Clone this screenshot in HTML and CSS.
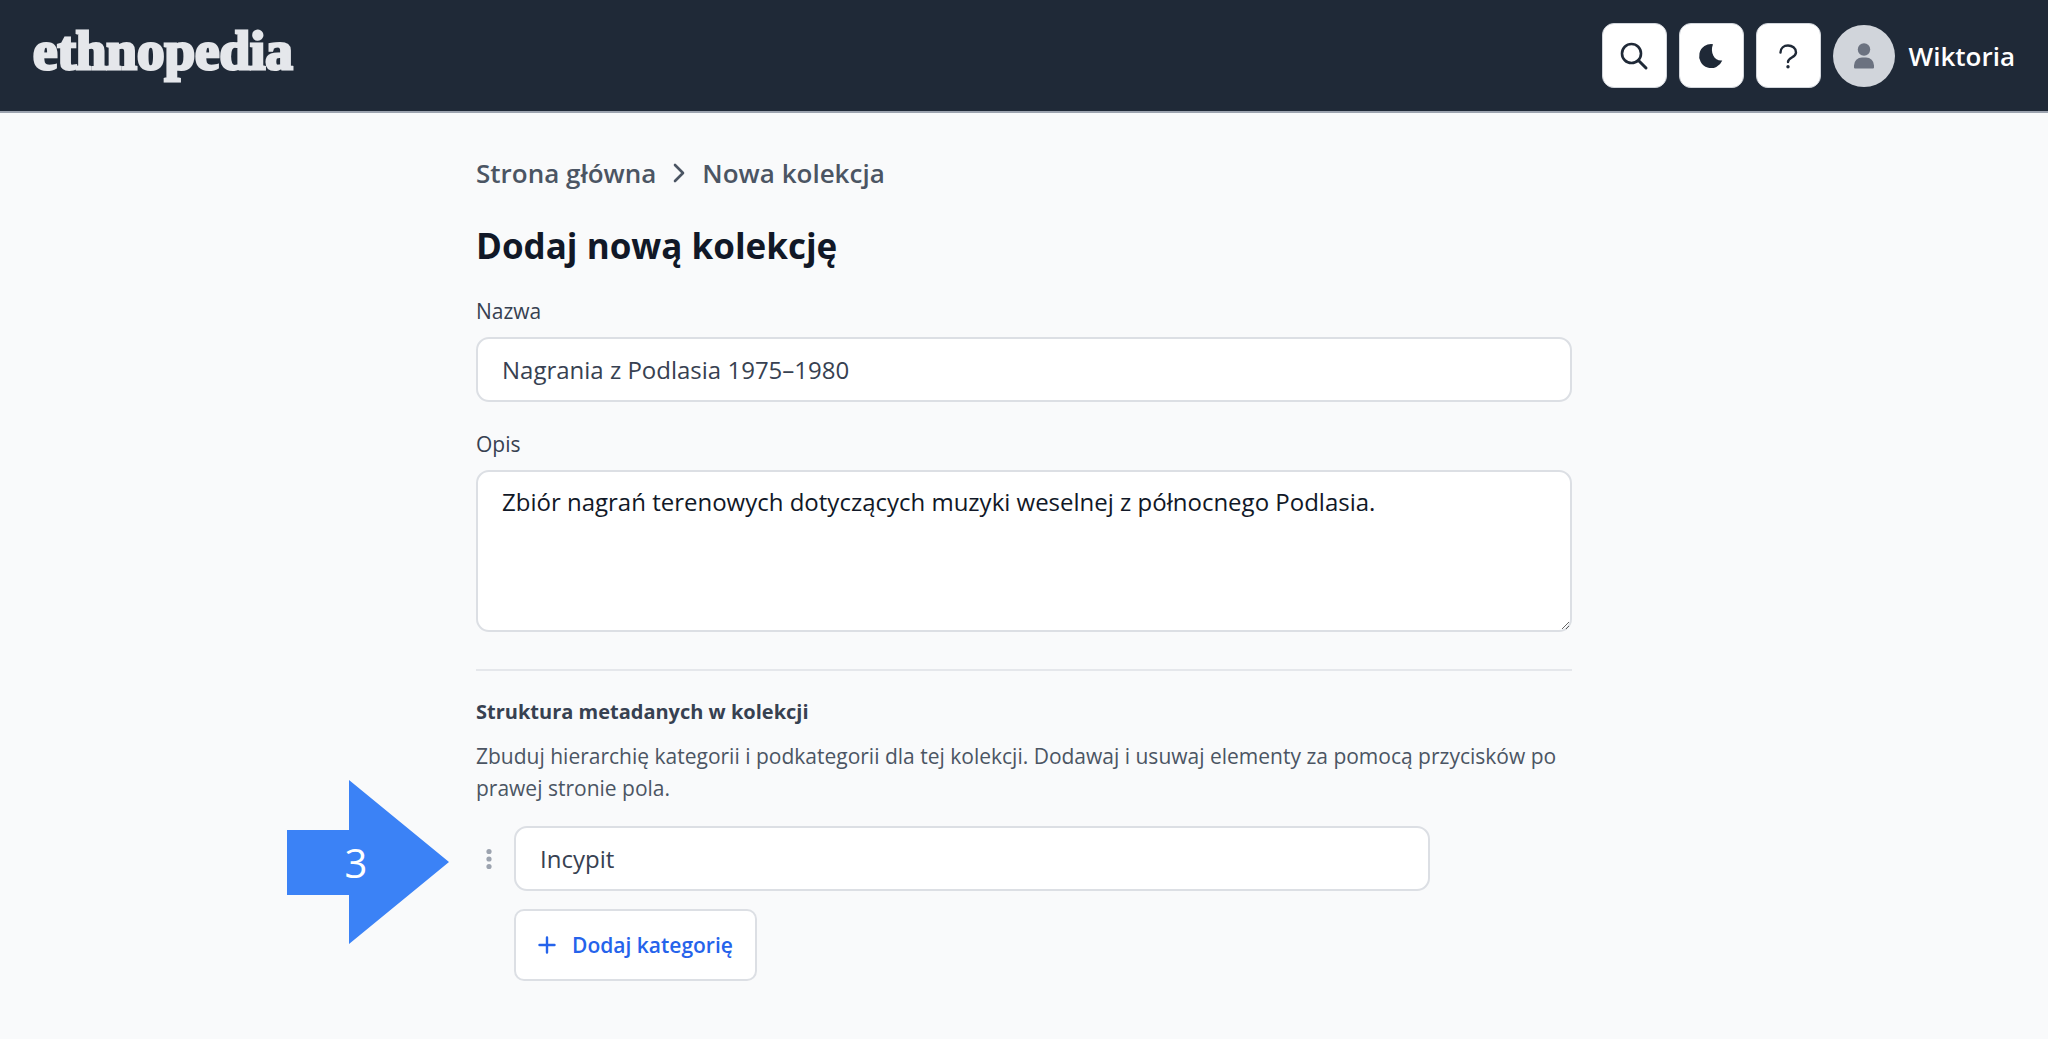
FILE: index.html
```html
<!DOCTYPE html>
<html lang="pl">
<head>
<meta charset="utf-8">
<meta name="viewport" content="width=device-width, initial-scale=1">
<title>Dodaj nową kolekcję – ethnopedia</title>
<link rel="stylesheet" href="styles.css">
</head>
<body>
<header class="topbar">
  <a class="logo" href="#">ethnopedia</a>
  <div class="actions">
    <button class="icon-button" type="button" aria-label="Szukaj">
      <svg width="32" height="32" viewBox="0 0 32 32" fill="none" stroke="currentColor" stroke-width="2.600"><circle cx="13.500" cy="13.500" r="9.500"/><path d="M20.500 20.500l7.500 7.500" stroke-linecap="round" stroke-width="3"/></svg>
    </button>
    <button class="icon-button" type="button" aria-label="Tryb ciemny">
      <svg width="32" height="32" viewBox="0 0 32 32" fill="currentColor"><path d="M18 4.200A12 12 0 1 0 27.300 20.500C20 21.500 14.500 13 18 4.200z"/></svg>
    </button>
    <button class="icon-button" type="button" aria-label="Pomoc">
      <svg width="32" height="32" viewBox="0 0 32 32" fill="none" stroke="currentColor" stroke-width="2.400" stroke-linecap="round"><path d="M8.500 12.500C8.500 8 12 5.500 16 5.500s8 2.500 8 7c0 5-8 5-8 9.500"/><circle cx="16" cy="26.700" r="1.700" fill="currentColor" stroke="none"/></svg>
    </button>
    <a class="user" href="#">
      <span class="avatar">
        <svg width="32" height="32" viewBox="0 0 32 32" fill="currentColor"><circle cx="16" cy="9.500" r="6.200"/><path d="M6 27.500V25.500a8 8 0 0 1 8-8h4a8 8 0 0 1 8 8v2q0 1-1 1H7q-1 0-1-1z"/></svg>
      </span>
      <span>Wiktoria</span>
    </a>
  </div>
</header>
<main class="page">
  <nav class="breadcrumb" aria-label="Okruszki">
    <a href="#">Strona główna</a>
    <svg width="12" height="20" viewBox="0 0 12 20" fill="none" stroke="currentColor" stroke-width="2.600" stroke-linecap="round" stroke-linejoin="round"><path d="M2 2l8 8-8 8"/></svg>
    <a href="#">Nowa kolekcja</a>
  </nav>
  <h1 class="title">Dodaj nową kolekcję</h1>
  <form class="form">
    <div class="field">
      <label for="name">Nazwa</label>
      <input class="control" id="name" type="text" value="Nagrania z Podlasia 1975–1980">
    </div>
    <div class="field">
      <label for="description">Opis</label>
      <textarea class="control description" id="description">Zbiór nagrań terenowych dotyczących muzyki weselnej z północnego Podlasia.</textarea>
    </div>
    <section class="structure">
      <h2>Struktura metadanych w kolekcji</h2>
      <p>Zbuduj hierarchię kategorii i podkategorii dla tej kolekcji. Dodawaj i usuwaj elementy za pomocą przycisków po prawej stronie pola.</p>
      <div class="category">
        <div class="step">
          <svg width="162" height="164" viewBox="0 0 162 164" fill="#3b82f6"><path d="M0 50h62V0l100 82-100 82v-49H0z"/></svg>
          <span>3</span>
        </div>
        <svg class="handle" width="26" height="26" viewBox="0 0 26 26" fill="#9ca3af"><circle cx="13" cy="5.500" r="2.600"/><circle cx="13" cy="13" r="2.600"/><circle cx="13" cy="20.500" r="2.600"/></svg>
        <input class="control" type="text" value="Incypit" aria-label="Nazwa kategorii">
      </div>
      <button class="add" type="button">
        <svg width="18" height="18" viewBox="0 0 18 18" fill="none" stroke="currentColor" stroke-width="2.400" stroke-linecap="round"><path d="M9 1.500v15M1.500 9h15"/></svg>
        Dodaj kategorię
      </button>
    </section>
  </form>
</main>
</body>
</html>
```
FILE: styles.css
```css
* { box-sizing: border-box; }

body {
  margin: 0;
  background: #f9fafb;
  color: #111827;
  font-family: "Open Sans", "Noto Sans", sans-serif;
  font-size: 24px;
}

h1, h2, p { margin: 0; }
a { color: inherit; text-decoration: none; }
button, input, textarea { font: inherit; }
svg { display: block; flex: none; }

.topbar {
  display: flex;
  align-items: center;
  justify-content: space-between;
  height: 113px;
  padding: 0 33px;
  background: #1f2937;
  border-bottom: 2px solid #9ca3af;
}

.logo {
  padding-bottom: 10px;
  color: #e5e7eb;
  font-family: "Liberation Serif", serif;
  font-size: 55px;
  font-weight: 700;
  line-height: 64px;
  -webkit-text-stroke: 3px #e5e7eb;
}

.actions { display: flex; align-items: center; gap: 12px; }

.icon-button {
  display: grid;
  place-items: center;
  width: 65px;
  height: 65px;
  padding: 0;
  background: #fff;
  border: 1px solid #d1d5db;
  border-radius: 12px;
  color: #1f2937;
}

.user {
  display: flex;
  align-items: center;
  gap: 14px;
  color: #fff;
  font-size: 26px;
  font-weight: 600;
}

.avatar {
  display: grid;
  place-items: center;
  width: 62px;
  height: 62px;
  background: #d1d5db;
  border-radius: 50%;
  color: #6b7280;
}

.page {
  max-width: 1096px;
  margin: 0 auto;
  padding: 39px 0;
}

.breadcrumb {
  display: flex;
  align-items: center;
  gap: 17px;
  color: #4b5563;
  font-size: 26px;
  font-weight: 600;
  line-height: 42px;
}

.title {
  margin-top: 28px;
  font-size: 35px;
  font-weight: 700;
  line-height: 48px;
}

.form { margin-top: 25px; }

.field {
  display: flex;
  flex-direction: column;
  gap: 10px;
  margin-bottom: 26px;
  color: #374151;
  font-size: 21px;
  line-height: 32px;
}

.control {
  display: block;
  width: 100%;
  height: 65px;
  padding: 0 24px;
  background: #fff;
  border: 2px solid #dcdfe4;
  border-radius: 13px;
  color: #374151;
  font-size: 24px;
  line-height: 32px;
}

.description {
  height: 162px;
  padding-top: 14px;
  color: #111827;
}

.structure {
  margin-top: 37px;
  padding-top: 25px;
  border-top: 2px solid #e5e7eb;
  font-size: 21px;
}

.structure h2 {
  color: #374151;
  font-size: 20px;
  font-weight: 700;
  line-height: 32px;
}

.structure p {
  margin-top: 12px;
  color: #4b5563;
  line-height: 32px;
}

.category {
  position: relative;
  display: flex;
  align-items: center;
  gap: 12px;
  margin-top: 22px;
  padding-right: 142px;
}

.step {
  position: absolute;
  top: -46px;
  right: calc(100% + 27px);
  display: grid;
  color: #fff;
  font-size: 40px;
}

.step > * { grid-area: 1 / 1; }
.step > span { place-self: center; padding-right: 24px; }

.add {
  display: flex;
  align-items: center;
  gap: 16px;
  height: 72px;
  margin: 18px 0 0 38px;
  padding: 0 22px;
  background: #fff;
  border: 2px solid #dcdfe4;
  border-radius: 10px;
  color: #2563eb;
  font-size: 21px;
  font-weight: 600;
}
```
